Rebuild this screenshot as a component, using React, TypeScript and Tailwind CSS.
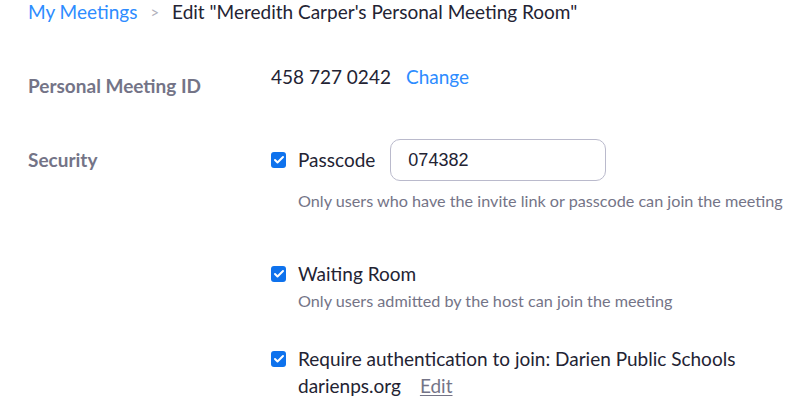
import { Check } from 'lucide-react';

const Box = () => (
  <span className="flex h-4 w-[15px] shrink-0 items-center justify-center rounded-[3px] bg-[#0e72ed]">
    <Check size={12} strokeWidth={4} color="white" />
  </span>
);

export default function App() {
  return (
    <div className="min-h-[407px] w-[799px] bg-white text-[#232333]" style={{ fontFamily: 'Lato, "Open Sans", sans-serif' }}>
      {/* breadcrumb */}
      <div className="flex items-center pl-[28px] pt-0 text-[19px] leading-[24px]">
        <span className="text-[#2d8cff]">My Meetings</span>
        <span className="mx-[13px] text-[15px] text-[#b0b0bc]">&gt;</span>
        <span>Edit "Meredith Carper's Personal Meeting Room"</span>
      </div>

      {/* PMI */}
      <div className="mt-[31px] flex pl-[28px]">
        <div className="w-[243px] pt-[19px] text-[19px] font-bold leading-[24px] text-[#747487]">Personal Meeting ID</div>
        <div className="flex items-center text-[19px] leading-[24px]">
          <span>458 727 0242</span>
          <span className="ml-[15px] text-[#2d8cff]">Change</span>
        </div>
      </div>

      {/* Security */}
      <div className="mt-[41px] flex pl-[28px]">
        <div className="w-[243px] pt-[9px] text-[19px] font-bold leading-[24px] text-[#747487]">Security</div>
        <div className="flex flex-col">
          <div className="flex items-center">
            <Box />
            <span className="ml-[12px] text-[19px] leading-[24px]">Passcode</span>
            <div
              className="ml-[15px] flex h-[42px] w-[216px] items-center rounded-[10px] border border-[#babacc] pl-[17px] text-[18px]"
              style={{ fontFamily: '"Liberation Sans", Arial, sans-serif' }}
            >
              074382
            </div>
          </div>
          <div className="ml-[27px] mt-[10px] text-[16.2px] leading-[20px] text-[#747487]">
            Only users who have the invite link or passcode can join the meeting
          </div>

          <div className="mt-[51px] flex items-center">
            <Box />
            <span className="ml-[12px] text-[19px] leading-[24px]">Waiting Room</span>
          </div>
          <div className="ml-[27px] mt-[5px] text-[16.2px] leading-[20px] text-[#747487]">
            Only users admitted by the host can join the meeting
          </div>

          <div className="mt-[36px] flex items-center">
            <Box />
            <span className="ml-[12px] text-[19px] leading-[24px]">Require authentication to join: Darien Public Schools</span>
          </div>
          <div className="ml-[27px] mt-[3px] flex text-[19px] leading-[24px]">
            <span>darienps.org</span>
            <span className="ml-[19px] text-[#747487] underline underline-offset-2">Edit</span>
          </div>
        </div>
      </div>
    </div>
  );
}
